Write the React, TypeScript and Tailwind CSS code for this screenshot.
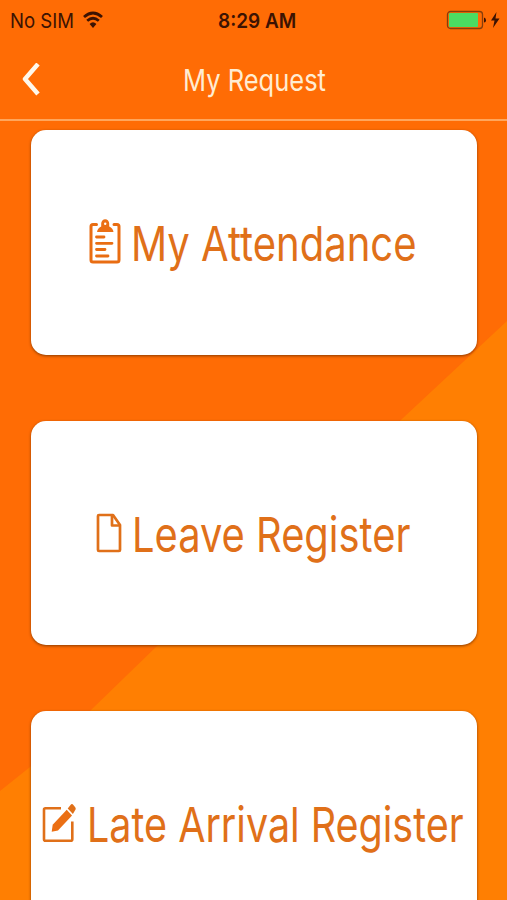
import type { ReactNode } from "react";

function ClipboardIcon() {
  return (
    <svg className="h-[46px] w-[32px] shrink-0" viewBox="0 0 32 46" fill="none" stroke="#e96d12">
      <path d="M7.500 5.500H4Q2 5.500 2 7.500V41Q2 43 4 43H28Q30 43 30 41V7.500Q30 5.500 28 5.500H25" strokeWidth="3" strokeLinecap="round" />
      <path d="M8 13Q8.500 9 12.200 7.500V4.500A3.900 4.200 0 0 1 20.200 4.500V7.500Q24 9 24.500 13Z" fill="#eb6f14" stroke="none" />
      <circle cx="16.200" cy="4.800" r="1.200" fill="#fff" stroke="none" />
      <path d="M7.500 18H15M7.500 24.300H23M7.500 30.500H16M7.500 37H19" strokeWidth="2.800" strokeLinecap="round" />
    </svg>
  );
}

function PageIcon() {
  return (
    <svg className="h-[40px] w-[26px] shrink-0" viewBox="0 0 26 40" fill="none" stroke="#e07019" strokeWidth="2.700" strokeLinejoin="round">
      <path d="M2 3Q2 2 3 2H17L24 12V37Q24 38 23 38H3Q2 38 2 37Z" />
      <path d="M16 2V12.500H24" />
    </svg>
  );
}

function EditIcon() {
  return (
    <svg className="h-[40px] w-[34px] shrink-0" viewBox="0 0 34 40" fill="none" stroke="#e07019">
      <path d="M19 5.200H3.500Q2 5.200 2 6.700V36.300Q2 37.800 3.500 37.800H28.800Q30.300 37.800 30.300 36.300V18.500" strokeWidth="2.600" />
      <path d="M24.700 6.800L30 12.500L16 27.400L9.700 28.700L10.700 21.800Z" fill="#eb6f14" stroke="none" />
      <path d="M25.700 5.400L28.700 1.700Q30 .3 31.600 2.200L33.200 4.200Q34.300 5.700 33.100 7.200L30.900 11Z" fill="#e07019" stroke="none" />
    </svg>
  );
}

function Card({ icon, children }: { icon: ReactNode; children: ReactNode }) {
  return (
    <section className="flex h-[224.5px] shrink-0 items-center rounded-[15px] bg-white shadow-[0_1px_3px_#8b3b00]">
      {icon}
      {children}
    </section>
  );
}

export default function App() {
  return (
    <main className="relative isolate h-[900px] w-[507px] overflow-hidden bg-[#ff6c05] font-['Inter',sans-serif]">
      <svg className="absolute inset-0 -z-10" width="507" height="900" viewBox="0 0 507 900">
        <path d="M507 321L403 418L157 646L91 710L30 767L0 791V900H507Z" fill="#ff7f02" />
      </svg>
      <div className="grid h-10 grid-cols-3 items-center text-[#3c1303]">
        <div className="flex items-center pl-[10px]">
          <span className="w-[73px] origin-left translate-y-px scale-x-[0.905] whitespace-nowrap text-[20.500px]">No SIM</span>
          <svg className="h-[18px] w-[20px]" viewBox="0 0 20 18" fill="none" stroke="currentColor" strokeWidth="2.800">
            <path d="M1 6Q10-2 19 6M4.200 9.700Q10 4.700 15.800 9.700" />
            <path d="M6.600 13Q10 9.700 13.400 13L10 17Z" fill="currentColor" stroke="none" />
          </svg>
        </div>
        <div className="w-[78px] translate-x-[49px] translate-y-px origin-left scale-x-[0.925] whitespace-nowrap text-[20.500px] font-semibold">8:29 AM</div>
        <div className="flex items-center justify-end pr-[6px]">
          <svg className="h-[20px] w-[55px]" viewBox="0 0 55 20">
            <rect x="1.500" y="1.500" width="35" height="17" rx="3" fill="none" stroke="#863e0c" strokeWidth="1.300" />
            <rect x="3" y="3" width="29" height="14" rx="1" fill="#4cdc62" />
            <path d="M38 7.500Q40 8 40 10.200T38 12.500Z" fill="currentColor" />
            <path d="M50.500 2L45 10.500H48.500L47 18L53.500 8.500H49.500Z" fill="currentColor" />
          </svg>
        </div>
      </div>
      <header className="flex h-[81px] items-center border-b-2 border-[#ffa65c] pl-[22px] text-[#ffecd2]">
        <svg className="h-[34px] w-[18px]" viewBox="0 0 18 34" fill="none" stroke="#fff8ec" strokeWidth="4.500">
          <path d="M16 1L3 16L16 31" strokeLinejoin="round" />
        </svg>
        <h1 className="ml-[142.5px] origin-left translate-y-px scale-x-[0.85] whitespace-nowrap text-[30px] font-normal">My Request</h1>
      </header>
      <div className="flex flex-col gap-[66px] pl-[31px] pr-[30px] pt-[9px] text-[48.500px] leading-[60px] text-[#e07019]">
        <Card icon={<div className="ml-[58px] mr-[10px]"><ClipboardIcon /></div>}>
          <h2 className="origin-left translate-y-[2px] scale-x-[0.825] whitespace-nowrap">My Attendance</h2>
        </Card>
        <Card icon={<div className="ml-[65px] mr-[10px]"><PageIcon /></div>}>
          <h2 className="origin-left translate-y-[2px] scale-x-[0.822] whitespace-nowrap">Leave Register</h2>
        </Card>
        <Card icon={<div className="ml-[11px] mr-[11px]"><EditIcon /></div>}>
          <h2 className="origin-left translate-y-[2px] scale-x-[0.814] whitespace-nowrap">Late Arrival Register</h2>
        </Card>
      </div>
    </main>
  );
}
